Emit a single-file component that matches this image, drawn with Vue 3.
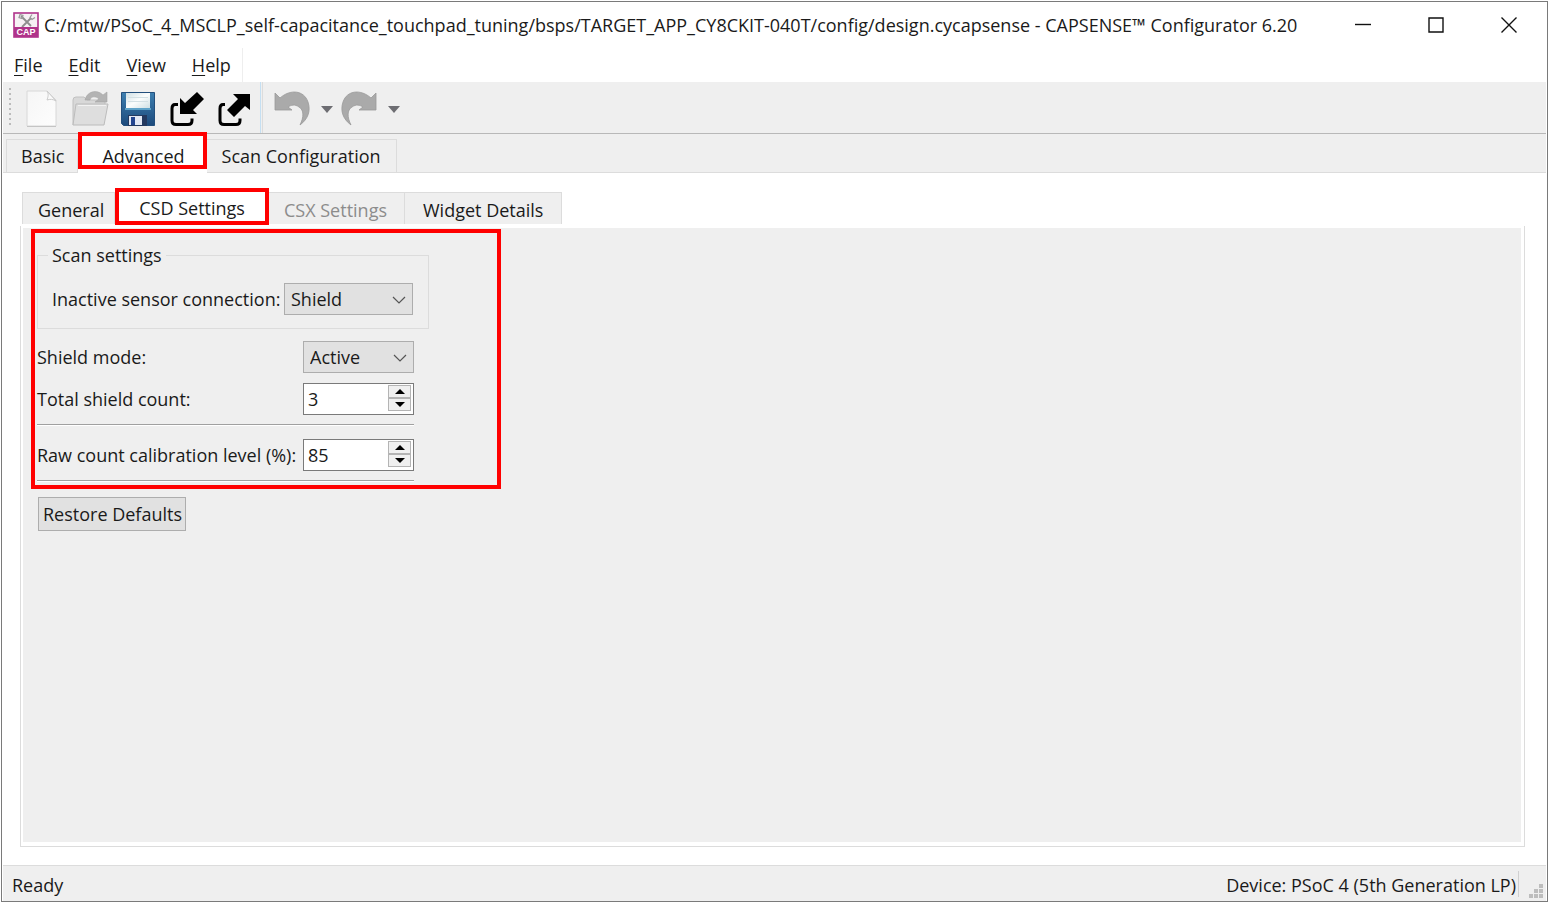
<script setup>
import { ref } from 'vue'

const title =
  'C:/mtw/PSoC_4_MSCLP_self-capacitance_touchpad_tuning/bsps/TARGET_APP_CY8CKIT-040T/config/design.cycapsense - CAPSENSE™ Configurator 6.20'
const menus = ['File', 'Edit', 'View', 'Help']
const mainTabs = ['Basic', 'Advanced', 'Scan Configuration']
const subTabs = [
  { name: 'General' },
  { name: 'CSD Settings' },
  { name: 'CSX Settings', disabled: true },
  { name: 'Widget Details' },
]
const mainTab = ref('Advanced')
const subTab = ref('CSD Settings')
const inactive = ref('Shield')
const mode = ref('Active')
const shieldCount = ref(3)
const level = ref(85)

function restore() {
  inactive.value = 'Shield'
  mode.value = 'Active'
  shieldCount.value = 3
  level.value = 85
}
</script>

<template>
  <div class="window">
    <header class="titlebar">
      <svg class="app-icon" viewBox="0 0 26 26" aria-hidden="true">
        <rect x="1" y="1" width="24" height="24" fill="#f6f1f4" stroke="#b0338a" stroke-width="1.6" />
        <path d="M8 4l10 10M18 6l-9 9" stroke="#8d8d8d" stroke-width="1.8" fill="none" />
        <path d="M19 2.500l-2 3 2 2 3-2M7 2.500l3 1-1 3-3-1z" stroke="#9a9a9a" stroke-width="1.2" fill="none" />
        <rect x="1" y="15" width="24" height="10" fill="#b0338a" />
        <text x="13" y="23" text-anchor="middle" class="app-icon-text">CAP</text>
      </svg>
      <h1 class="title">{{ title }}</h1>
      <div class="window-buttons">
        <button type="button" aria-label="Minimize">
          <svg viewBox="0 0 16 16"><path d="M0 7.500h16" /></svg>
        </button>
        <button type="button" aria-label="Maximize">
          <svg viewBox="0 0 16 16"><path d="M1 1h14v14h-14z" /></svg>
        </button>
        <button type="button" aria-label="Close">
          <svg viewBox="0 0 16 16"><path d="M.5.5l15 15M15.500.5l-15 15" /></svg>
        </button>
      </div>
    </header>

    <nav class="menubar">
      <button v-for="m in menus" :key="m" type="button"><u>{{ m[0] }}</u>{{ m.slice(1) }}</button>
    </nav>

    <div class="toolbar" role="toolbar" aria-label="Main">
      <span class="grip"></span>
      <button type="button" class="tool" aria-label="New">
        <svg viewBox="0 0 40 40">
          <defs>
            <linearGradient id="paper" x1="0" y1="0" x2="1" y2="1">
              <stop offset="0" stop-color="#f6f6f6" /><stop offset="1" stop-color="#fdfdfd" />
            </linearGradient>
          </defs>
          <path d="M6 3h20l9 9v26H6z" fill="url(#paper)" stroke="#d8d8d8" />
          <path d="M6 38.500h29" stroke="#c4c4c4" />
          <path d="M26 3c2 3 1 6 0 9 3-1 6-1 9 1z" fill="#fafafa" stroke="#cacaca" />
        </svg>
      </button>
      <button type="button" class="tool" aria-label="Open">
        <svg viewBox="0 0 40 40">
          <path d="M4 37V12q0-3 3-3h8l3 3h18v8" fill="#d8d8d8" stroke="#c0c0c0" />
          <path d="M16 12c2-9 12-11 18-5l4-3v10H26l4-3c-3-3-8-3-9 1z" fill="#b3b3b3" stroke="#a6a6a6" stroke-width=".6" />
          <path d="M7 16h32l-4 21H4z" fill="#dedede" stroke="#bcbcbc" />
          <path d="M9 17.500h28" stroke="#f2f2f2" />
        </svg>
      </button>
      <button type="button" class="tool" aria-label="Save">
        <svg viewBox="0 0 40 40">
          <defs>
            <linearGradient id="disk" x1="0" y1="0" x2="0" y2="1">
              <stop offset="0" stop-color="#3d7fb0" /><stop offset="1" stop-color="#1d4a7c" />
            </linearGradient>
            <linearGradient id="label" x1="0" y1="0" x2="1" y2="1">
              <stop offset="0" stop-color="#cfdfe4" /><stop offset=".5" stop-color="#fbfdfd" /><stop offset="1" stop-color="#cfe0e4" />
            </linearGradient>
          </defs>
          <path d="M4.500 4.500h33v33h-31l-2-2z" fill="url(#disk)" stroke="#234f7d" />
          <rect x="9" y="5" width="24" height="15" fill="url(#label)" />
          <path d="M11 9.500h20M11 13.500h20" stroke="#d3e0e4" />
          <rect x="8" y="20" width="26" height="2" fill="#5fa3c9" />
          <rect x="11" y="27" width="19" height="11" fill="#24395f" />
          <rect x="12" y="28" width="13" height="9" fill="#e3e8f4" />
          <rect x="14" y="29" width="4" height="8" fill="#24458f" />
        </svg>
      </button>
      <button type="button" class="tool" aria-label="Import">
        <svg viewBox="0 0 40 40">
          <path d="M13 16.500h-3q-3 0-3 4v12q0 4 4 4h12q4 0 4-4v-2" fill="none" stroke="#000" stroke-width="3" />
          <path d="M32 4l7 7-11 11 4 4H15V10l5 5z" fill="#000" />
        </svg>
      </button>
      <button type="button" class="tool" aria-label="Export">
        <svg viewBox="0 0 40 40">
          <path d="M12 16.500h-2q-3 0-3 4v12q0 4 4 4h12q4 0 4-4v-2" fill="none" stroke="#000" stroke-width="3" />
          <path d="M20 6h17v16l-5-4-11 11-7-7 11-11z" fill="#000" />
        </svg>
      </button>
      <span class="divider"></span>
      <button type="button" class="history" aria-label="Undo">
        <svg viewBox="0 0 40 40">
          <path d="M3 5l5 5C18 1 32 2 36 14c3 9 0 17-8 23 4-8 4-15-1-18-4-3-8-2-11 0l4 3H3z" fill="#aaa" stroke="#999" stroke-width=".8" />
        </svg>
      </button>
      <button type="button" class="caret" aria-label="Undo history"></button>
      <button type="button" class="history" aria-label="Redo">
        <svg viewBox="0 0 40 40">
          <path d="M37 5l-5 5C22 1 8 2 4 14c-3 9 0 17 8 23-4-8-4-15 1-18 4-3 8-2 11 0l-4 3h17z" fill="#aaa" stroke="#999" stroke-width=".8" />
        </svg>
      </button>
      <button type="button" class="caret" aria-label="Redo history"></button>
    </div>

    <div class="tabs main-tabs" role="tablist">
      <button
        v-for="t in mainTabs" :key="t" type="button" role="tab" class="tab"
        :class="{ active: t === mainTab }" :aria-selected="t === mainTab" @click="mainTab = t"
      >{{ t }}</button>
    </div>

    <main class="page">
      <div class="tabs sub-tabs" role="tablist">
        <button
          v-for="t in subTabs" :key="t.name" type="button" role="tab" class="tab"
          :class="{ active: t.name === subTab }" :aria-selected="t.name === subTab"
          :disabled="t.disabled" @click="subTab = t.name"
        >{{ t.name }}</button>
      </div>

      <div class="frame">
        <div class="panel">
          <section class="settings">
            <fieldset>
              <legend>Scan settings</legend>
              <div class="row">
                <label for="inactive">Inactive sensor connection:</label>
                <span class="combo wide">
                  <select id="inactive" v-model="inactive">
                    <option>Shield</option><option>Ground</option><option>High-Z</option>
                  </select>
                  <svg viewBox="0 0 14 8" aria-hidden="true"><path d="M1 1l6 6 6-6" /></svg>
                </span>
              </div>
            </fieldset>
            <div class="form">
              <div class="row">
                <label for="mode">Shield mode:</label>
                <span class="combo">
                  <select id="mode" v-model="mode">
                    <option>Active</option><option>Passive</option><option>Disabled</option>
                  </select>
                  <svg viewBox="0 0 14 8" aria-hidden="true"><path d="M1 1l6 6 6-6" /></svg>
                </span>
              </div>
              <div class="row">
                <label for="count">Total shield count:</label>
                <span class="spin">
                  <input id="count" v-model.number="shieldCount" type="number" />
                  <span class="steps">
                    <button type="button" aria-label="Increase shield count" @click="shieldCount++"><svg viewBox="0 0 10 5"><path d="M0 5l5-5 5 5z" /></svg></button>
                    <button type="button" aria-label="Decrease shield count" @click="shieldCount--"><svg viewBox="0 0 10 5"><path d="M0 0l5 5 5-5z" /></svg></button>
                  </span>
                </span>
              </div>
              <hr />
              <div class="row">
                <label for="level">Raw count calibration level (%):</label>
                <span class="spin">
                  <input id="level" v-model.number="level" type="number" />
                  <span class="steps">
                    <button type="button" aria-label="Increase level" @click="level++"><svg viewBox="0 0 10 5"><path d="M0 5l5-5 5 5z" /></svg></button>
                    <button type="button" aria-label="Decrease level" @click="level--"><svg viewBox="0 0 10 5"><path d="M0 0l5 5 5-5z" /></svg></button>
                  </span>
                </span>
              </div>
              <hr />
            </div>
          </section>
          <button type="button" class="restore" @click="restore">Restore Defaults</button>
        </div>
      </div>
    </main>

    <footer class="status">
      <span>Ready</span>
      <span class="device">Device: PSoC 4 (5th Generation LP)</span>
      <svg class="size-grip" viewBox="0 0 14 14" aria-hidden="true">
        <path d="M10 0h4v4h-4zM5 5h4v4h-4zM10 5h4v4h-4zM0 10h4v4h-4zM5 10h4v4h-4zM10 10h4v4h-4z" />
      </svg>
    </footer>
  </div>
</template>

<style>
body {
  background: #fff;
}
</style>

<style scoped>
.window {
  box-sizing: border-box;
  display: flex;
  flex-direction: column;
  min-height: calc(100vh - 2px);
  margin: 1px;
  padding: 0 1px;
  border: 1px solid #7a7a7a;
  background: #fff;
  color: #1a1a1a;
  font-family: "Open Sans", "Noto Sans", sans-serif;
  font-size: 18px;
  line-height: 24px;
}
button,
select,
input {
  box-sizing: border-box;
  margin: 0;
  padding: 0;
  border: 0;
  border-radius: 0;
  background: none;
  color: inherit;
  font: inherit;
}
svg {
  display: block;
}
.titlebar {
  display: flex;
  align-items: center;
  height: 46px;
  padding: 0 1px 0 10px;
}
.app-icon {
  width: 26px;
  height: 26px;
  margin-right: 5px;
}
.app-icon-text {
  fill: #fff;
  font: bold 9px "Liberation Sans", sans-serif;
}
.title {
  flex: 1;
  margin: 0;
  font-size: inherit;
  font-weight: normal;
  white-space: nowrap;
}
.window-buttons {
  display: flex;
}
.window-buttons button {
  display: grid;
  place-items: center;
  width: 73px;
  height: 44px;
}
.window-buttons svg {
  width: 16px;
  height: 16px;
  fill: none;
  stroke: #111;
  stroke-width: 1.4;
}
.menubar {
  display: flex;
  align-self: flex-start;
  gap: 26px;
  height: 34px;
  padding: 0 11px;
  border-right: 1px solid #eee;
}
.menubar u {
  text-underline-offset: 3px;
  text-decoration-thickness: 1px;
}
.toolbar {
  display: flex;
  align-items: center;
  height: 51px;
  padding-left: 6px;
  border-bottom: 1px solid #b8b8b8;
  background: #efefef;
}
.grip {
  width: 2px;
  height: 40px;
  margin-right: 6px;
  background: repeating-linear-gradient(#bbb 0 2px, #efefef 2px 5px);
}
.tool {
  display: grid;
  place-items: center;
  width: 48px;
  height: 48px;
}
.tool svg,
.history svg {
  width: 40px;
  height: 40px;
}
.divider {
  align-self: stretch;
  width: 1px;
  margin: 0 9px 0 3px;
  border-left: 1px solid #c4dff2;
  border-right: 1px solid #dcdcdc;
}
.caret {
  width: 12px;
  height: 7px;
  margin: 4px 6px 0 9px;
  background: #6d6d72;
  clip-path: polygon(0 0, 100% 0, 50% 100%);
}
.tabs {
  display: flex;
  align-items: flex-end;
}
.tab {
  height: 33px;
  border: 1px solid #dcdcdc;
  border-bottom: 0;
  border-left: 0;
  background: #efefef;
}
.tab:first-child {
  border-left: 1px solid #dcdcdc;
}
.tab:disabled {
  color: #8c8c8c;
}
.tab.active {
  z-index: 1;
  border: 4px solid #f00;
  background: #fff;
}
.main-tabs {
  height: 38px;
  padding-left: 3px;
  border-bottom: 1px solid #dcdcdc;
  background: #efefef;
}
.main-tabs .tab {
  padding: 0 15px;
}
.main-tabs .tab:first-child {
  padding: 0 13px 0 14px;
}
.main-tabs .tab.active {
  height: 37px;
  padding: 8px 18px 0 20px;
  margin-bottom: 3px;
  box-shadow: 0 4px #fff;
}
.page {
  display: flex;
  flex: 1;
  flex-direction: column;
  padding: 16px 21px 18px 17px;
}
.sub-tabs {
  height: 35px;
  padding: 0 0 2px 2px;
}
.sub-tabs .tab {
  height: 32px;
  padding: 2px 18px 0;
}
.sub-tabs .tab:first-child {
  padding: 2px 10px 0 15px;
}
.sub-tabs .tab:disabled {
  padding: 2px 17px 0 15px;
}
.sub-tabs .tab.active {
  height: 37px;
  padding: 2px 20px 0;
  margin-bottom: -1px;
}
.frame {
  display: flex;
  flex: 1;
  padding: 2px 3px 4px 2px;
  border: 1px solid #dcdcdc;
  border-top: 0;
}
.panel {
  flex: 1;
  padding: 1px 8px;
  background: #efefef;
}
.settings {
  box-sizing: border-box;
  width: 470px;
  padding: 10px 2px 3px;
  border: 4px solid #f00;
}
fieldset {
  box-sizing: border-box;
  width: 392px;
  margin: 0;
  padding: 16px 15px 13px 14px;
  border: 1px solid #dcdcdc;
}
legend {
  margin-left: -4px;
  padding: 0 4px;
}
.row {
  display: flex;
  align-items: center;
  justify-content: space-between;
}
.form {
  display: flex;
  flex-direction: column;
  gap: 10px;
  width: 377px;
  margin-top: 12px;
}
.combo {
  position: relative;
  width: 111px;
}
.combo.wide {
  width: 129px;
}
.combo select {
  display: block;
  width: 100%;
  height: 32px;
  padding: 0 6px;
  border: 1px solid #adadad;
  background: #e1e1e1;
  appearance: none;
}
.combo svg {
  position: absolute;
  top: 13px;
  right: 7px;
  width: 14px;
  height: 8px;
  fill: none;
  stroke: #555;
  stroke-width: 1.2;
  pointer-events: none;
}
.spin {
  box-sizing: border-box;
  display: flex;
  width: 111px;
  height: 32px;
  padding: 1px 2px 1px 1px;
  border: 1px solid #7a7a7a;
  background: #fff;
}
.spin input {
  flex: 1;
  min-width: 0;
  padding-left: 3px;
  appearance: textfield;
}
.spin input::-webkit-inner-spin-button {
  display: none;
}
.steps {
  display: flex;
  flex-direction: column;
  width: 23px;
  height: 26px;
}
.steps button {
  display: grid;
  flex: 1;
  place-items: center;
  border: 1px solid #b4b4b4;
  background: #f0f0f0;
}
.steps svg {
  width: 10px;
  height: 5px;
}
hr {
  width: 100%;
  height: 1px;
  margin: -1px 0 3px;
  border: 0;
  border-bottom: 1px solid #fff;
  background: #a0a0a0;
}
hr:last-child {
  margin-bottom: 0;
}
.restore {
  display: block;
  height: 34px;
  margin: 8px 0 0 7px;
  padding: 0 3px 0 4px;
  border: 1px solid #adadad;
  background: #e1e1e1;
}
.status {
  display: flex;
  align-items: center;
  height: 35px;
  padding: 0 3px 0 9px;
  border-top: 1px solid #dcdcdc;
  background: #efefef;
}
.status span {
  padding-top: 2px;
}
.device {
  margin-left: auto;
  padding-right: 2px;
  border-right: 1px solid #d0d0d0;
}
.size-grip {
  align-self: flex-end;
  width: 14px;
  height: 14px;
  margin: 0 0 3px 10px;
  fill: #bdbdbd;
}
</style>
